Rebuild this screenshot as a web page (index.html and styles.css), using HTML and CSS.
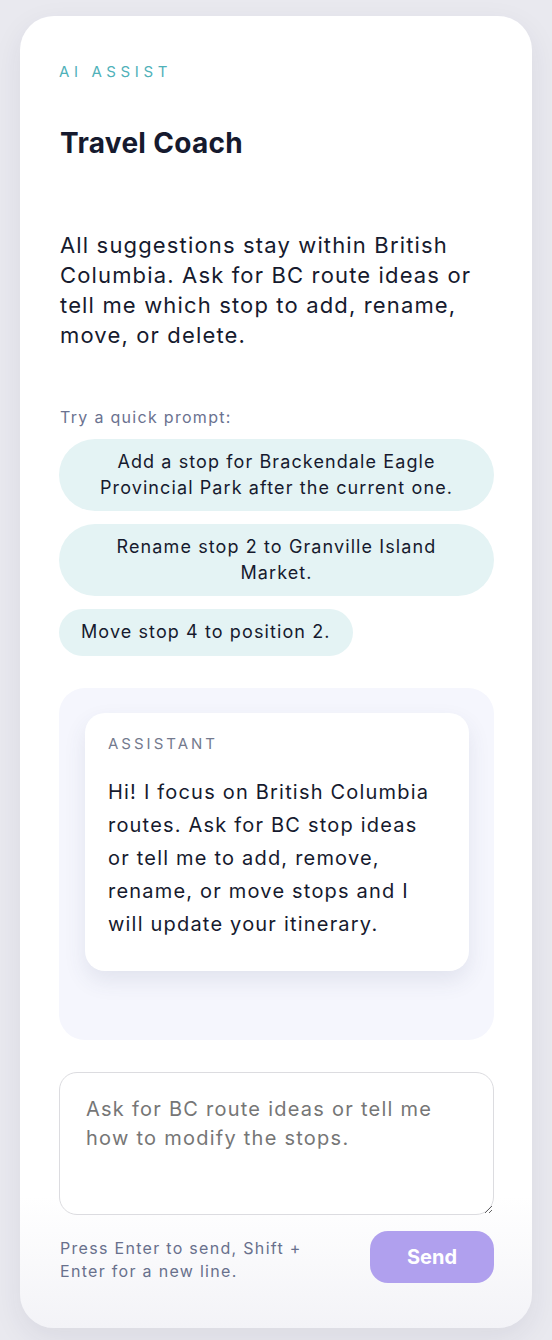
FILE: index.html
```html
<!DOCTYPE html>
<html lang="en">
<head>
<meta charset="utf-8">
<title>Travel Coach</title>
<link rel="stylesheet" href="styles.css">
</head>
<body>
<main class="card">
  <div class="eyebrow">AI ASSIST</div>
  <h1 class="title">Travel Coach</h1>
  <p class="intro">All suggestions stay within British Columbia. Ask for BC route ideas or tell me which stop to add, rename, move, or delete.</p>
  <div class="prompt-label">Try a quick prompt:</div>
  <div class="chips">
    <button class="chip">Add a stop for Brackendale Eagle Provincial Park after the current one.</button>
    <button class="chip">Rename stop 2 to Granville Island Market.</button>
    <button class="chip">Move stop 4 to position 2.</button>
  </div>
  <section class="chat">
    <div class="bubble">
      <div class="bubble-role">ASSISTANT</div>
      <div class="bubble-text">Hi! I focus on British Columbia routes. Ask for BC stop ideas or tell me to add, remove, rename, or move stops and I will update your itinerary.</div>
    </div>
  </section>
  <textarea class="input" placeholder="Ask for BC route ideas or tell me how to modify the stops."></textarea>
  <div class="footer">
    <div class="hint">Press Enter to send, Shift + Enter for a new line.</div>
    <button class="send">Send</button>
  </div>
</main>
</body>
</html>
```

FILE: styles.css
```css
* { box-sizing: border-box; }
html, body { margin: 0; }
body {
  background: #e9e9ef;
  padding: 16px 20px 12px;
  font-family: Inter, "Noto Sans", sans-serif;
  color: #161a2e;
}
.card {
  width: 512px;
  height: 1312px;
  background: linear-gradient(180deg, #ffffff 0%, #ffffff 90%, #f3f3f7 100%);
  border-radius: 34px;
  box-shadow: 0 10px 30px rgba(40, 40, 80, 0.08);
  padding: 46px 38px 0 39px;
  display: flex;
  flex-direction: column;
}
.eyebrow {
  font-size: 15px;
  line-height: 20px;
  letter-spacing: 4.6px;
  color: #4fb1b9;
}
.title {
  margin: 44px 0 0;
  font-size: 28px;
  line-height: 34px;
  font-weight: 700;
  letter-spacing: 0.3px;
  color: #161a2e;
  padding-left: 1px;
}
.intro {
  margin: 70px 0 0;
  font-size: 22px;
  line-height: 30px;
  letter-spacing: 1.15px;
  color: #161a2e;
  padding-left: 1px;
}
.prompt-label {
  margin-top: 56px;
  font-size: 16px;
  line-height: 22px;
  letter-spacing: 1.3px;
  color: #6b7290;
  padding-left: 1px;
}
.chips {
  margin-top: 11px;
  display: flex;
  flex-direction: column;
  align-items: flex-start;
  gap: 13px;
}
.chip {
  border: none;
  background: #e4f3f4;
  border-radius: 36px;
  padding: 10px 22px;
  font-family: inherit;
  font-size: 18px;
  line-height: 26px;
  letter-spacing: 1.1px;
  color: #161a2e;
  text-align: center;
}
.chip:nth-child(1), .chip:nth-child(2) { width: 100%; }
.chip:nth-child(3) { padding-top: 10px; padding-bottom: 11px; }
.chat {
  margin-top: 32px;
  height: 352px;
  background: #f5f6fd;
  border-radius: 26px;
  padding: 25px 25px 25px 26px;
}
.bubble {
  background: #ffffff;
  border-radius: 20px;
  box-shadow: 0 10px 22px rgba(60, 64, 110, 0.10);
  padding: 21px 23px 30px;
}
.bubble-role {
  font-size: 15px;
  line-height: 19px;
  letter-spacing: 3px;
  color: #747a8e;
}
.bubble-text {
  margin-top: 23px;
  font-size: 20px;
  line-height: 33px;
  letter-spacing: 1.2px;
  color: #161a2e;
}
.input {
  display: block;
  margin-top: 32px;
  width: 100%;
  height: 143px;
  border: 1px solid #dcdce0;
  border-radius: 18px;
  padding: 22px 26px;
  font-family: inherit;
  font-size: 20px;
  line-height: 29px;
  letter-spacing: 1.25px;
  color: #161a2e;
  background: #fff;
  outline: none;
}
.input::placeholder { color: #767676; }
.footer {
  margin-top: 16px;
  display: flex;
  justify-content: space-between;
  align-items: center;
}
.hint {
  width: 280px;
  font-size: 16px;
  line-height: 23px;
  letter-spacing: 1.3px;
  color: #68708c;
  padding-left: 1px;
  margin-top: 6px;
}
.send {
  width: 124px;
  height: 52px;
  border: none;
  border-radius: 18px;
  background: #b0a0ee;
  color: #ffffff;
  font-family: inherit;
  font-size: 20px;
  font-weight: 700;
}
```
